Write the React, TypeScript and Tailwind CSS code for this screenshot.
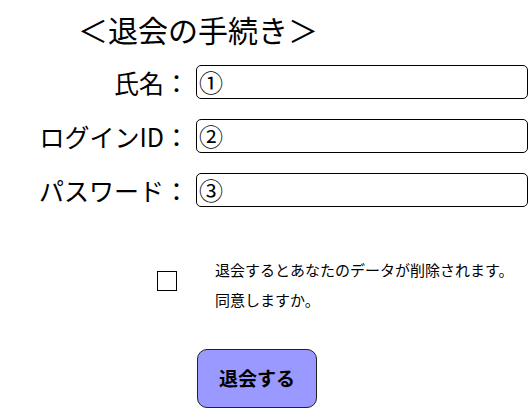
import React from "react";

const rows = [
  { label: "氏名：", mark: "①" },
  { label: "ログインID：", mark: "②" },
  { label: "パスワード：", mark: "③" },
];

export default function App() {
  return (
    <div className="w-[529px] h-[410px] overflow-hidden bg-white text-black font-['Noto_Sans_CJK_JP','Noto_Sans',sans-serif]">
      <h1 className="pl-[78px] pt-[10px] text-[30px] leading-[38px] font-normal">＜退会の手続き＞</h1>
      <div className="mt-[17px] flex flex-col gap-[20px]">
        {rows.map((r) => (
          <div key={r.mark} className="flex items-center">
            <div className="w-[189px] text-right text-[25px] leading-[34px]">{r.label}</div>
            <div className="ml-[7px] w-[332px] h-[34px] border border-black rounded-[5px] flex items-center pl-[2px] text-[24px] leading-[32px]">
              {r.mark}
            </div>
          </div>
        ))}
      </div>
      <div className="mt-[48px] flex items-start">
        <div className="ml-[157px] mt-[16px] w-[20px] h-[20px] border border-black bg-white"></div>
        <div className="ml-[38px] text-[15px] leading-[30px]">
          <p>退会するとあなたのデータが削除されます。</p>
          <p>同意しますか。</p>
        </div>
      </div>
      <div className="mt-[34px] pl-[197px]">
        <button className="w-[120px] h-[59px] bg-[#9999ff] border border-[#222] rounded-[10px] text-[19px] font-bold">
          退会する
        </button>
      </div>
    </div>
  );
}
